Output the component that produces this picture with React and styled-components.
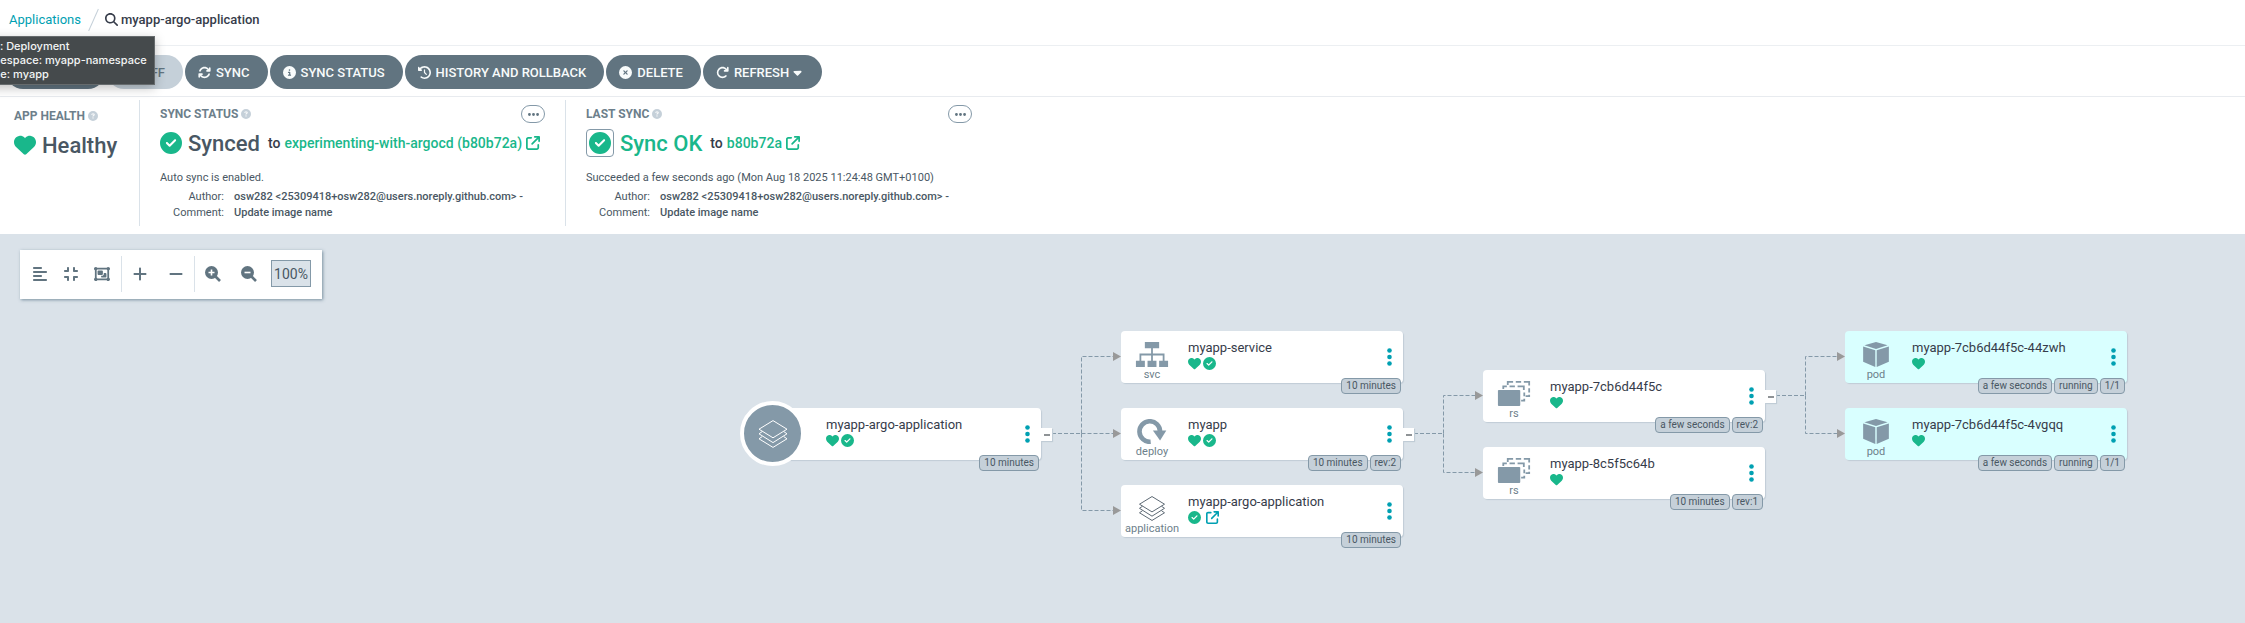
import React from "react";
import styled, { createGlobalStyle, css } from "styled-components";
import {
  FaAlignLeft,
  FaArrowRotateRight,
  FaArrowsRotate,
  FaArrowUpRightFromSquare,
  FaCaretDown,
  FaCircleCheck,
  FaCircleInfo,
  FaCircleQuestion,
  FaCircleXmark,
  FaClockRotateLeft,
  FaCompress,
  FaEllipsis,
  FaFileMedical,
  FaHeart,
  FaMagnifyingGlass,
  FaMinus,
  FaObjectGroup,
  FaPlus,
} from "react-icons/fa6";

const color = {
  text: "#363c4a",
  dark: "#495763",
  label: "#6d7f8b",
  button: "#617480",
  canvas: "#dae2e9",
  line: "#dae2e9",
  node: "#8499a8",
  badge: "#c5d0d9",
  green: "#19b78b",
  teal: "#00a0b2",
};

const GlobalStyle = createGlobalStyle`
  * { box-sizing: border-box; }
  body {
    margin: 0;
    font-family: Roboto, "Liberation Sans", sans-serif;
    color: ${color.text};
    background: #fff;
    overflow: hidden;
  }
  button { font: inherit; cursor: pointer; }
  a { text-decoration: none; }
  dl, dd, p, h2 { margin: 0; }
`;

const Page = styled.div`
  display: flex;
  flex-direction: column;
  min-height: 100vh;
`;

const TopBar = styled.nav`
  display: flex;
  align-items: center;
  height: 46px;
  padding: 0 9px 6px;
  border-bottom: 1px solid #eceff2;
  font-size: 13px;
`;

const TopLink = styled.a`
  color: ${color.teal};
`;

const Slash = styled.span`
  width: 1px;
  height: 24px;
  margin: 0 11px 0 12px;
  background: #c5d0d9;
  transform: rotate(24deg);
`;

const Current = styled.span`
  display: flex;
  align-items: center;
  gap: 3px;
  font-weight: 500;
`;

const Actions = styled.div`
  display: flex;
  align-items: center;
  gap: 2px;
  height: 51px;
  padding: 2px 6px 0;
  border-bottom: 1px solid #eceff2;
`;

const ActionButton = styled.button`
  display: flex;
  align-items: center;
  gap: 5px;
  height: 34px;
  padding: 0 18px 0 13px;
  border: 0;
  border-radius: 17px;
  font-size: 13px;
  font-weight: 500;
  white-space: nowrap;
  color: ${(p) => (p.$muted ? color.button : "#f8fbfb")};
  background: ${(p) => (p.$muted ? "#c5d0d9" : color.button)};
  svg { font-size: 13px; }
`;

const ButtonText = styled.span`
  display: flex;
  align-items: center;
  gap: 2px;
`;

const Tooltip = styled.div`
  position: absolute;
  top: 36px;
  left: -33px;
  padding: 2px 7px 3px 8px;
  border: 1px solid #666b6d;
  background: #454a4c;
  box-shadow: 0 3px 10px rgba(0, 0, 0, 0.25);
  color: #f3f5f5;
  font-family: Inter, "Liberation Sans", sans-serif;
  font-size: 11px;
  font-weight: 500;
  line-height: 14px;
  white-space: nowrap;
`;

const StatusPanel = styled.section`
  display: flex;
  padding: 3px 0 8px;
  height: 137px;
  position: relative;
  box-shadow: 0 1px 2px rgba(80, 100, 120, 0.35);
`;

const StatusItem = styled.div`
  width: ${(p) => (p.$narrow ? "140px" : "426px")};
  padding: ${(p) => (p.$narrow ? "8px 14px" : "6px 20px")};
  border-right: ${(p) => (p.$last ? "0" : `1px solid ${color.line}`)};
`;

const StatusHead = styled.div`
  display: flex;
  justify-content: space-between;
  align-items: center;
  height: 16px;
`;

const StatusLabel = styled.h2`
  display: flex;
  align-items: center;
  gap: 3px;
  font-size: 12px;
  font-weight: 700;
  color: ${color.label};
  svg { font-size: 10px; color: #c5d0d9; }
`;

const MoreButton = styled.button`
  display: flex;
  align-items: center;
  justify-content: center;
  width: 24px;
  height: 18px;
  padding: 0;
  border: 1px solid ${color.node};
  border-radius: 9px;
  background: #fff;
  color: ${color.button};
  font-size: 13px;
`;

const StatusValue = styled.div`
  display: flex;
  align-items: center;
  height: 42px;
  font-size: 14px;
  font-weight: 500;
  white-space: nowrap;
  color: ${color.text};
`;

const StatusIcon = styled.span`
  display: flex;
  margin-right: 6px;
  font-size: 22px;
  color: ${color.green};
  ${(p) =>
    p.$boxed &&
    css`
      padding: 2px;
      border: 1px solid ${color.node};
      border-radius: 4px;
    `}
`;

const StatusWord = styled.span`
  margin-right: 8px;
  font-size: 22px;
  color: ${(p) => (p.$ok ? color.green : color.dark)};
`;

const RevisionLink = styled.a`
  display: flex;
  align-items: center;
  gap: 4px;
  margin-left: 4px;
  color: ${color.green};
`;

const Note = styled.p`
  margin-top: 6px;
  font-size: 11px;
  line-height: 16px;
  white-space: nowrap;
  color: ${color.dark};
`;

const Commit = styled.dl`
  display: grid;
  grid-template-columns: 64px 1fr;
  column-gap: 10px;
  margin-top: 3px;
  font-size: 11px;
  line-height: 16px;
  white-space: nowrap;
  color: ${color.dark};
  dt { text-align: right; }
  dd { font-weight: 500; }
`;

const Canvas = styled.main`
  position: relative;
  flex: 1;
  padding: 16px 20px;
  background: ${color.canvas};
`;

const GraphTools = styled.div`
  display: inline-flex;
  align-items: center;
  height: 49px;
  padding: 0 11px 2px 4px;
  background: #fff;
  box-shadow: 1px 1px 3px rgba(80, 110, 130, 0.7);
`;

const ToolGroup = styled.div`
  display: flex;
  align-items: center;
  height: 36px;
  padding-right: ${(p) => (p.$flush ? "0" : "4px")};
  border-right: ${(p) => (p.$last ? "0" : `1px solid ${color.line}`)};
`;

const ToolButton = styled.button`
  display: flex;
  align-items: center;
  justify-content: center;
  width: ${(p) => (p.$wide ? "36px" : "31px")};
  height: 32px;
  padding: 0;
  border: 0;
  background: none;
  color: ${color.button};
  font-size: 16px;
`;

const ZoomLevel = styled.output`
  display: flex;
  align-items: center;
  justify-content: center;
  width: 40px;
  height: 27px;
  border: 1px solid ${color.node};
  background: ${color.canvas};
  color: ${color.dark};
  font-size: 14px;
`;

const Edges = styled.svg`
  position: absolute;
  top: 0;
  left: 0;
  width: 100%;
  height: 100%;
  pointer-events: none;
`;

const Node = styled.article`
  position: absolute;
  left: ${(p) => p.$x}px;
  top: ${(p) => p.$y}px;
  width: 282px;
  height: 52px;
  display: flex;
  border-radius: 4px;
  background: ${(p) => (p.$pod ? "#d9ffff" : "#fff")};
  box-shadow: 1px 1px 1px #c0ccd6;
`;

const KindColumn = styled.div`
  display: flex;
  flex-direction: column;
  align-items: center;
  width: 62px;
  margin-right: 5px;
  padding-top: 11px;
  font-size: 11px;
  line-height: 16px;
  color: ${color.label};
`;

const RootIcon = styled.div`
  position: absolute;
  left: -19px;
  top: -7px;
  display: flex;
  align-items: center;
  justify-content: center;
  width: 65px;
  height: 65px;
  border: 4px solid #fff;
  border-radius: 50%;
  background: ${color.node};
`;

const NodeBody = styled.div`
  flex: 1;
  padding-top: 8px;
`;

const NodeName = styled.div`
  font-size: 13px;
  line-height: 18px;
  white-space: nowrap;
`;

const NodeState = styled.div`
  display: flex;
  gap: 2px;
  height: 13px;
  font-size: 13px;
  color: ${color.green};
  a { display: flex; margin-left: 3px; color: ${color.teal}; }
`;

const KebabButton = styled.button`
  width: 16px;
  height: 24px;
  margin: 14px 6px 0 0;
  padding: 0;
  border: 0;
  background: none;
  svg { display: block; margin: 0 auto; }
`;

const Badges = styled.div`
  position: absolute;
  right: 2px;
  bottom: -11px;
  display: flex;
  gap: 2px;
`;

const Badge = styled.span`
  height: 16px;
  padding: 0 4px;
  border: 1px solid ${color.node};
  border-radius: 4px;
  background: ${color.badge};
  font-size: 10px;
  line-height: 14px;
  white-space: nowrap;
  color: ${color.dark};
`;

const Toggle = styled.button`
  position: absolute;
  left: 100%;
  top: 20px;
  display: flex;
  align-items: center;
  justify-content: center;
  width: 11px;
  height: 13px;
  padding: 0;
  border: 0;
  background: #fff;
  box-shadow: 1px 1px 1px #c0ccd6;
`;

const ToggleBar = styled.span`
  width: 6px;
  height: 2px;
  background: #8f9396;
`;

function ServiceIcon() {
  return (
    <svg width="36" height="28" viewBox="0 0 36 28" fill={color.node}>
      <path d="M10 0h16v7h-7v6h13v8h4v7H26v-7h4v-6H19v6h4v7H13v-7h4v-6H6v6h4v7H0v-7h4v-8h13V7h-7z" />
    </svg>
  );
}

function DeployIcon() {
  return (
    <svg width="32" height="28" viewBox="0 0 32 28">
      <path d="M14.500 25.500A11.500 11.500 0 1 1 25 14" fill="none" stroke={color.node} strokeWidth="5.200" />
      <path d="M17 13h15l-7 11z" fill={color.node} />
    </svg>
  );
}

function ReplicaIcon() {
  return (
    <svg width="36" height="28" viewBox="0 0 36 28">
      <path
        d="M11 4.500V1h6M20 1h6M29 1h6v4M35 8v5M35 15.500V17h-4"
        fill="none"
        stroke={color.node}
        strokeWidth="2"
      />
      <path
        d="M6 9V6h4M13 6h6M22 6h7v4M29.500 13v4M29.500 20v2H26"
        fill="none"
        stroke={color.node}
        strokeWidth="2"
      />
      <rect y="10" width="25" height="18" rx="1" fill={color.node} />
    </svg>
  );
}

function PodIcon() {
  return (
    <svg width="30" height="28" viewBox="0 0 30 28" fill={color.node}>
      <path d="M15 0l13 3.600-13 4.200L2 3.600z" />
      <path d="M.6 5l13.600 4.200V28L.6 22z" />
      <path d="M29.400 5L15.800 9.200V28l13.600-6z" />
    </svg>
  );
}

function LayersIcon({ stroke = color.dark }) {
  return (
    <svg width="30" height="28" viewBox="0 0 30 28" fill="none" stroke={stroke} strokeLinejoin="round">
      <path d="M15 .6l14 8.600-14 8.600L1 9.200z" />
      <path d="M4.300 11.500L1 13.800l14 8.800 14-8.800-3.300-2.300" />
      <path d="M4.300 16.500L1 18.800l14 8.600 14-8.600-3.300-2.300" />
    </svg>
  );
}

function ZoomGlass({ plus }) {
  return (
    <svg width="16" height="16" viewBox="0 0 16 16">
      <circle cx="6.500" cy="6.500" r="6.500" fill={color.button} />
      <path d="M10.500 10.500l4.500 4.500" stroke={color.button} strokeWidth="2.600" />
      <path d={plus ? "M3.500 6.500h6M6.500 3.500v6" : "M3.500 6.500h6"} stroke="#fff" strokeWidth="1.600" />
    </svg>
  );
}

function Kebab() {
  return (
    <svg width="5" height="18" viewBox="0 0 5 18" fill={color.teal}>
      <circle cx="2.500" cy="2.500" r="2.300" />
      <circle cx="2.500" cy="9" r="2.300" />
      <circle cx="2.500" cy="15.500" r="2.300" />
    </svg>
  );
}

const kindIcons = {
  svc: ServiceIcon,
  deploy: DeployIcon,
  application: LayersIcon,
  rs: ReplicaIcon,
  pod: PodIcon,
};

const nodes = [
  { id: "root", x: 759, y: 174, name: "myapp-argo-application", state: ["heart", "check"], badges: ["10 minutes"], toggle: true },
  { id: "svc", kind: "svc", x: 1121, y: 97, name: "myapp-service", state: ["heart", "check"], badges: ["10 minutes"] },
  { id: "deploy", kind: "deploy", x: 1121, y: 174, name: "myapp", state: ["heart", "check"], badges: ["10 minutes", "rev:2"], toggle: true },
  { id: "app", kind: "application", x: 1121, y: 251, name: "myapp-argo-application", state: ["check", "link"], badges: ["10 minutes"] },
  { id: "rs2", kind: "rs", x: 1483, y: 136, name: "myapp-7cb6d44f5c", state: ["heart"], badges: ["a few seconds", "rev:2"], toggle: true },
  { id: "rs1", kind: "rs", x: 1483, y: 213, name: "myapp-8c5f5c64b", state: ["heart"], badges: ["10 minutes", "rev:1"] },
  { id: "pod1", kind: "pod", x: 1845, y: 97, name: "myapp-7cb6d44f5c-44zwh", state: ["heart"], badges: ["a few seconds", "running", "1/1"] },
  { id: "pod2", kind: "pod", x: 1845, y: 174, name: "myapp-7cb6d44f5c-4vgqq", state: ["heart"], badges: ["a few seconds", "running", "1/1"] },
];

const edges = [
  ["root", "svc"],
  ["root", "deploy"],
  ["root", "app"],
  ["deploy", "rs2"],
  ["deploy", "rs1"],
  ["rs2", "pod1"],
  ["rs2", "pod2"],
];

const nodeById = Object.fromEntries(nodes.map((n) => [n.id, n]));

function edgeGeometry([from, to]) {
  const a = nodeById[from];
  const b = nodeById[to];
  const y1 = a.y + 25.5;
  const y2 = b.y + 25.5;
  const mid = b.x - 39.5;
  return { start: a.x + 293, end: b.x, mid, y1, y2 };
}

function GraphEdges() {
  const lines = edges.map(edgeGeometry);
  const trunks = lines.filter((l, i) => lines.findIndex((o) => o.mid === l.mid) === i);
  return (
    <Edges aria-hidden="true">
      <g fill="none" stroke={color.node} strokeDasharray="4 2">
        {trunks.map((l) => (
          <path key={l.mid} d={`M${l.start} ${l.y1}H${l.mid}`} />
        ))}
        {lines.map((l, i) => (
          <path key={i} d={`M${l.mid} ${l.y1}V${l.y2}H${l.end - 8}`} />
        ))}
      </g>
      {lines.map((l, i) => (
        <path key={i} d={`M${l.end - 8} ${l.y2 - 4.5}l8 4.500-8 4.500z`} fill="#999" />
      ))}
    </Edges>
  );
}

function StateMark({ type }) {
  if (type === "heart") return <FaHeart />;
  if (type === "check") return <FaCircleCheck />;
  return (
    <a href="#open" aria-label="Open application">
      <FaArrowUpRightFromSquare />
    </a>
  );
}

function ResourceNode({ node }) {
  const Icon = kindIcons[node.kind];
  return (
    <Node $x={node.x} $y={node.y} $pod={node.kind === "pod"}>
      <KindColumn>
        {Icon ? (
          <>
            <Icon />
            <span>{node.kind}</span>
          </>
        ) : (
          <RootIcon>
            <LayersIcon stroke="#fff" />
          </RootIcon>
        )}
      </KindColumn>
      <NodeBody>
        <NodeName>{node.name}</NodeName>
        <NodeState>
          {node.state.map((s) => (
            <StateMark key={s} type={s} />
          ))}
        </NodeState>
      </NodeBody>
      <KebabButton aria-label={`${node.name} menu`}>
        <Kebab />
      </KebabButton>
      <Badges>
        {node.badges.map((b) => (
          <Badge key={b}>{b}</Badge>
        ))}
      </Badges>
      {node.toggle && (
        <Toggle aria-label="Collapse">
          <ToggleBar />
        </Toggle>
      )}
    </Node>
  );
}

function CommitInfo() {
  return (
    <Commit>
      <dt>Author:</dt>
      <dd>osw282 &lt;25309418+osw282@users.noreply.github.com&gt; -</dd>
      <dt>Comment:</dt>
      <dd>Update image name</dd>
    </Commit>
  );
}

function SyncItem({ label, word, ok, revision, note, last }) {
  return (
    <StatusItem $last={last}>
      <StatusHead>
        <StatusLabel>
          {label}
          <FaCircleQuestion />
        </StatusLabel>
        <MoreButton aria-label={`${label} details`}>
          <FaEllipsis />
        </MoreButton>
      </StatusHead>
      <StatusValue>
        <StatusIcon $boxed={ok}>
          <FaCircleCheck />
        </StatusIcon>
        <StatusWord $ok={ok}>{word}</StatusWord>
        to
        <RevisionLink href="#revision">
          {revision}
          <FaArrowUpRightFromSquare />
        </RevisionLink>
      </StatusValue>
      <Note>{note}</Note>
      <CommitInfo />
    </StatusItem>
  );
}

export default function App() {
  return (
    <Page>
      <GlobalStyle />
      <TopBar>
        <TopLink href="#applications">Applications</TopLink>
        <Slash />
        <Current>
          <FaMagnifyingGlass />
          myapp-argo-application
        </Current>
      </TopBar>
      <Actions>
        <ActionButton><FaCircleInfo />DETAILS</ActionButton>
        <ActionButton $muted><FaFileMedical />DIFF</ActionButton>
        <ActionButton><FaArrowsRotate />SYNC</ActionButton>
        <ActionButton><FaCircleInfo />SYNC STATUS</ActionButton>
        <ActionButton><FaClockRotateLeft />HISTORY AND ROLLBACK</ActionButton>
        <ActionButton><FaCircleXmark />DELETE</ActionButton>
        <ActionButton>
          <FaArrowRotateRight />
          <ButtonText>REFRESH <FaCaretDown /></ButtonText>
        </ActionButton>
      </Actions>
      <StatusPanel>
        <StatusItem $narrow>
          <StatusHead>
            <StatusLabel>
              APP HEALTH
              <FaCircleQuestion />
            </StatusLabel>
          </StatusHead>
          <StatusValue>
            <StatusIcon><FaHeart /></StatusIcon>
            <StatusWord>Healthy</StatusWord>
          </StatusValue>
        </StatusItem>
        <SyncItem
          label="SYNC STATUS"
          word="Synced"
          revision="experimenting-with-argocd (b80b72a)"
          note="Auto sync is enabled."
        />
        <SyncItem
          label="LAST SYNC"
          word="Sync OK"
          ok
          last
          revision="b80b72a"
          note="Succeeded a few seconds ago (Mon Aug 18 2025 11:24:48 GMT+0100)"
        />
      </StatusPanel>
      <Canvas>
        <GraphTools>
          <ToolGroup>
            <ToolButton aria-label="Align"><FaAlignLeft /></ToolButton>
            <ToolButton aria-label="Compact"><FaCompress /></ToolButton>
            <ToolButton aria-label="Group nodes"><FaObjectGroup /></ToolButton>
          </ToolGroup>
          <ToolGroup $flush>
            <ToolButton $wide aria-label="Expand all"><FaPlus /></ToolButton>
            <ToolButton $wide aria-label="Collapse all"><FaMinus /></ToolButton>
          </ToolGroup>
          <ToolGroup $last>
            <ToolButton $wide aria-label="Zoom in"><ZoomGlass plus /></ToolButton>
            <ToolButton $wide aria-label="Zoom out"><ZoomGlass /></ToolButton>
          </ToolGroup>
          <ZoomLevel>100%</ZoomLevel>
        </GraphTools>
        <GraphEdges />
        {nodes.map((n) => (
          <ResourceNode key={n.id} node={n} />
        ))}
      </Canvas>
      <Tooltip role="tooltip">
        <div>Kind: Deployment</div>
        <div>Namespace: myapp-namespace</div>
        <div>Name: myapp</div>
      </Tooltip>
    </Page>
  );
}
